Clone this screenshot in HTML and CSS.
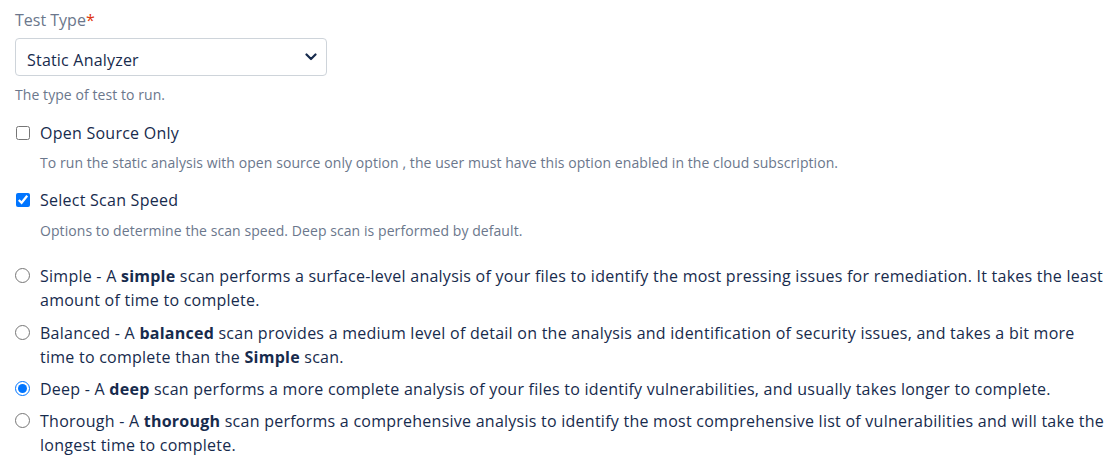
FILE: index.html
```html
<!DOCTYPE html>
<html lang="en">
<head>
<meta charset="utf-8">
<title>Test Type</title>
<link rel="stylesheet" href="styles.css">
</head>
<body>
<form class="form">
  <div class="field">
    <label class="field-label" for="testType">Test Type<span class="req">*</span></label>
    <div class="select">
      <span class="select-value">Static Analyzer</span>
      <svg class="chevron" width="12" height="8" viewBox="0 0 12 8" aria-hidden="true"><path d="M1.5 1.5 L6 6 L10.5 1.5" fill="none" stroke="#172b4d" stroke-width="2.2" stroke-linecap="round" stroke-linejoin="round"/></svg>
    </div>
    <div class="help">The type of test to run.</div>
  </div>

  <div class="check-group first">
    <label class="check"><input type="checkbox"><span>Open Source Only</span></label>
    <div class="help indent">To run the static analysis with open source only option , the user must have this option enabled in the cloud subscription.</div>
  </div>

  <div class="check-group second">
    <label class="check"><input type="checkbox" checked><span>Select Scan Speed</span></label>
    <div class="help indent">Options to determine the scan speed. Deep scan is performed by default.</div>
  </div>

  <div class="radios">
    <label class="radio"><input type="radio" name="speed"><span>Simple - A <b>simple</b> scan performs a surface-level analysis of your files to identify the most pressing issues for remediation. It takes the least amount of time to complete.</span></label>
    <label class="radio"><input type="radio" name="speed"><span>Balanced - A <b>balanced</b> scan provides a medium level of detail on the analysis and identification of security issues, and takes a bit more time to complete than the <b>Simple</b> scan.</span></label>
    <label class="radio"><input type="radio" name="speed" checked><span>Deep - A <b>deep</b> scan performs a more complete analysis of your files to identify vulnerabilities, and usually takes longer to complete.</span></label>
    <label class="radio"><input type="radio" name="speed"><span>Thorough - A <b>thorough</b> scan performs a comprehensive analysis to identify the most comprehensive list of vulnerabilities and will take the longest time to complete.</span></label>
  </div>
</form>
</body>
</html>
```

FILE: styles.css
```css
html, body {
  margin: 0;
  padding: 0;
  background: #ffffff;
}

body {
  font-family: "Open Sans", "Noto Sans", sans-serif;
  font-size: 16px;
  letter-spacing: 0.25px;
  line-height: 24px;
  color: #172b4d;
}

.form {
  padding: 8px 0 0 15px;
}

.field-label {
  display: block;
  color: #6b778c;
  letter-spacing: 0;
}

.req {
  color: #de350b;
}

.select {
  box-sizing: border-box;
  margin-top: 6px;
  width: 312px;
  height: 38px;
  border: 1px solid #ced4da;
  border-radius: 4px;
  display: flex;
  align-items: center;
  justify-content: space-between;
  padding: 5px 9px 0 11px;
}

.select-value {
  letter-spacing: 0.2px;
}

.chevron {
  display: block;
  margin-top: -5px;
}

.help {
  font-size: 14px;
  letter-spacing: 0.07px;
  line-height: 21px;
  color: #6b778c;
  margin-top: 8px;
}

.help.indent {
  margin-left: 25px;
  margin-top: 7px;
}

.check-group.first {
  margin-top: 16px;
}

.check-group.second {
  margin-top: 15px;
}

.check-group.second .help.indent {
  margin-top: 8px;
}

.check,
.radio {
  display: flex;
  align-items: flex-start;
}

.check input {
  flex: none;
  margin: 5px 10px 0 1px;
  width: 14px;
  height: 14px;
}

.radio input {
  flex: none;
  margin: 4px 10px 0 0;
  width: 15px;
  height: 15px;
}

.radios {
  margin-top: 23px;
  display: flex;
  flex-direction: column;
  gap: 8px;
}

.radio:nth-child(2) {
  margin-top: 1px;
}

.radio b {
  font-weight: 700;
}
```
